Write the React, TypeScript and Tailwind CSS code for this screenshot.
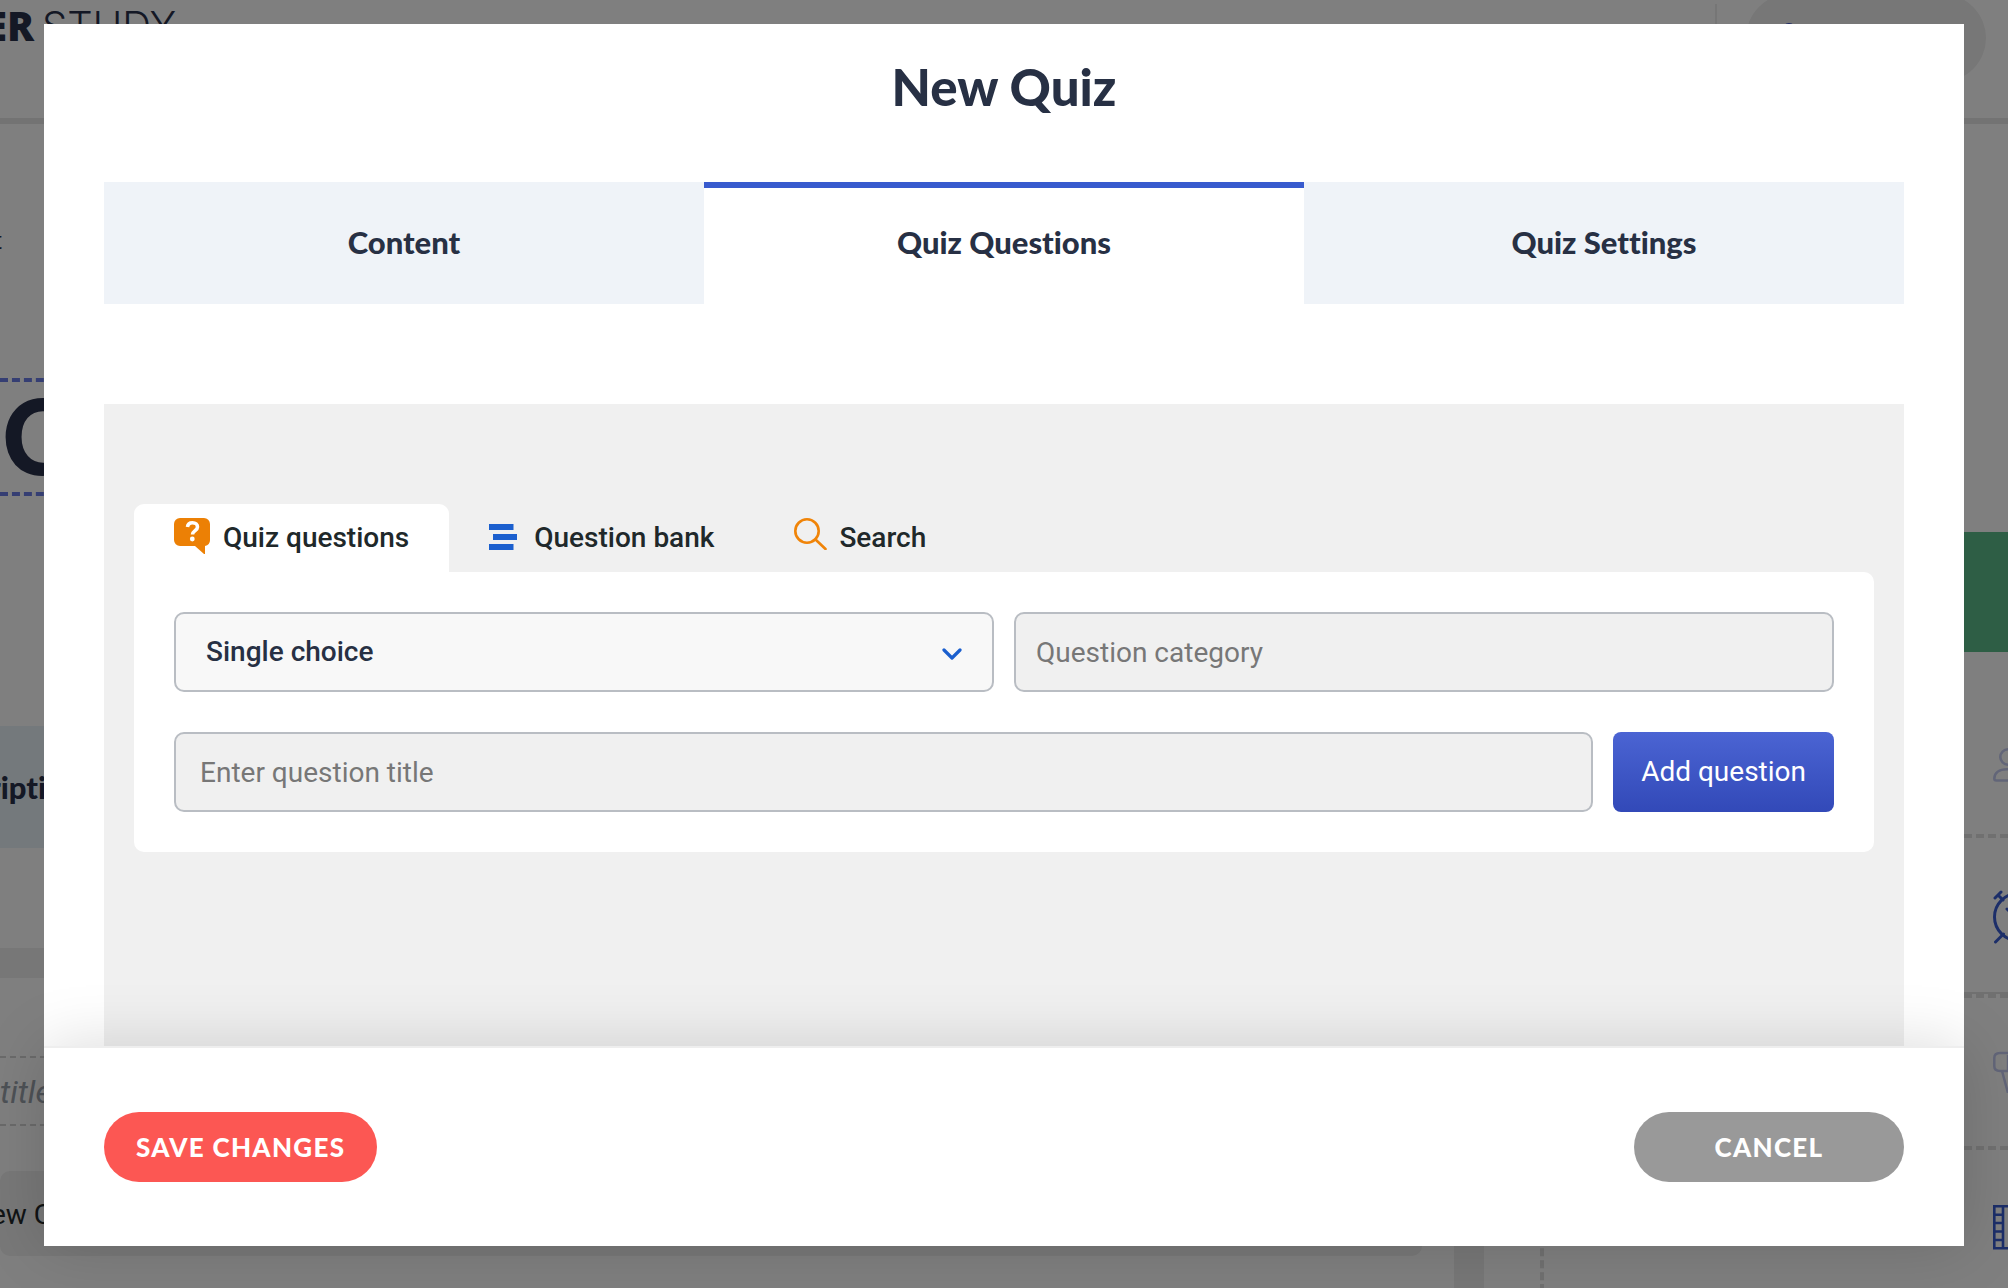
import React, { useState } from "react";

const mainTabs = ["Content", "Quiz Questions", "Quiz Settings"];

function BubbleIcon() {
  return (
    <svg width="36" height="36" viewBox="0 0 36 36" aria-hidden="true">
      <path d="M6 0h24a6 6 0 0 1 6 6v16a6 6 0 0 1-5 6V36h-1L21 28H6a6 6 0 0 1-6-6V6a6 6 0 0 1 6-6z" fill="#ec8005" />
      <path
        d="M13.500 9c.3-3 2.400-4.200 5-4.200 3 0 5 1.600 5 4.200 0 3.600-5 3.600-5 7.600"
        fill="none"
        stroke="#fff"
        strokeWidth="3.600"
      />
      <circle cx="18.300" cy="21" r="2.400" fill="#fff" />
    </svg>
  );
}

function BankIcon() {
  return (
    <svg width="28" height="26" viewBox="0 0 28 26" aria-hidden="true" fill="#1b5fce">
      <path d="M0 0h24.500v6H0zM4 10h24v6H4zM0 20h24.500v6H0z" />
    </svg>
  );
}

function SearchIcon() {
  return (
    <svg width="33" height="32" viewBox="0 0 33 32" aria-hidden="true" fill="none" stroke="#f08408" strokeWidth="2.600">
      <circle cx="13" cy="13" r="11.700" />
      <path d="M21.500 21.500 31.500 31" strokeLinecap="round" />
    </svg>
  );
}

function PageBehind() {
  return (
    <div aria-hidden="true" className="absolute inset-0 flex flex-col overflow-hidden bg-white">
      {/* site header */}
      <div className="-mt-[42px] flex h-[166px] shrink-0 items-center border-b-[6px] border-[#e6e6e6] pr-[22px]">
        <div className="mb-6 flex items-center gap-2 font-['Open_Sans',sans-serif] text-[40px] leading-[48px] text-[#29304a]">
          <span className="flex w-[34px] justify-end font-extrabold">ER</span>
          <span className="font-['Inter',sans-serif] font-light">STUDY</span>
        </div>
        <div className="ml-auto h-[68px] w-[2px] bg-[#ececec]" />
        <div className="ml-[29px] flex h-[88px] w-[240px] items-center rounded-full bg-[#eee] pl-9">
          <svg width="14" height="34" viewBox="0 0 14 34" fill="none" stroke="#3a50c8" strokeWidth="2">
            <circle cx="7" cy="9" r="6" />
          </svg>
        </div>
      </div>

      <div className="flex min-h-0 flex-1">
        {/* lesson editor */}
        <div className="flex min-w-0 flex-1 flex-col border-r-[30px] border-[#eee] text-[#29304a]">
          <div className="flex h-[254px] w-[2px] shrink-0 justify-end pt-[100px] text-2xl">t</div>
          <div className="h-[118px] shrink-0 border-y-4 border-dashed border-[#6a7de6] pl-[2px] font-['Lato',sans-serif] text-[104px] font-black leading-[106px]">
            C
          </div>
          <div className="mt-[230px] flex h-[122px] shrink-0 items-center bg-[#e9f2f9] font-['Lato',sans-serif] text-[31px] font-black [font-variant-ligatures:none]">
            <span className="-ml-[11px]">ription</span>
          </div>
          <div className="mt-[100px] h-[30px] shrink-0 bg-[#eee]" />
          <div className="mt-[78px] h-[70px] shrink-0 border-y-2 border-dashed border-[#d4d4d4] font-['Roboto',sans-serif] text-[32px] italic leading-[68px] text-[#9aa2ac]">
            title
          </div>
          <div className="mr-8 mt-[45px] flex h-[85px] shrink-0 items-center rounded-[10px] bg-[#f0f0f0] font-['Roboto',sans-serif] text-[28px] text-[#22282a]">
            <span className="-ml-[9px] pt-[2px]">ew Course</span>
          </div>
        </div>

        {/* lesson types */}
        <div className="flex w-[524px] shrink-0 flex-col pl-14">
          <div className="mt-[408px] h-[120px] shrink-0 bg-[#5cbc8a]" />
          <div className="flex flex-1 flex-col border-l-4 border-dashed border-[#e0e0e0]">
            <div className="flex h-[186px] shrink-0 items-center justify-end overflow-hidden border-b-4 border-dashed border-[#e0e0e0] pt-11">
              <svg width="15" height="34" viewBox="0 0 15 34" fill="none" stroke="#c4cbf0" strokeWidth="2.600">
                <circle cx="15" cy="9" r="7.700" />
                <path d="M15 21.300h-1C6 21.300 1.500 25 1.300 30.500c0 1.300.7 2 2 2H15" />
              </svg>
            </div>
            <div className="flex h-[160px] shrink-0 flex-col border-b-4 border-dashed border-[#e0e0e0]">
              <div className="flex flex-1 items-center justify-end overflow-hidden border-b-2 border-[#e0e0e0] pt-1">
                <svg width="15" height="54" viewBox="0 0 15 54" fill="none" stroke="#385dd2" strokeWidth="3" strokeLinecap="round">
                  <circle cx="25" cy="27" r="23.500" />
                  <path d="M2 8 8 2M5 5l5 5M2.500 52l8-8M14 19l4 4" />
                </svg>
              </div>
            </div>
            <div className="flex h-[152px] shrink-0 items-center justify-end overflow-hidden border-b-4 border-dashed border-[#e0e0e0]">
              <svg width="15" height="42" viewBox="0 0 15 42" fill="none" stroke="#c4cbf0" strokeWidth="2.500">
                <path d="M15 2H7Q1.300 2 1.300 7v8q0 5 5.700 5h8M15 4v16M9 20l6 22" />
              </svg>
            </div>
            <div className="flex h-[154px] shrink-0 items-center justify-end overflow-hidden">
              <svg width="15" height="45" viewBox="0 0 15 45" fill="none" stroke="#385dd2" strokeWidth="2.600">
                <path d="M16 1.300H1.300v42H16M10 1v42M1 9.700h9M1 18h9M1 26.500h9M1 35h9" />
              </svg>
            </div>
          </div>
        </div>
      </div>
      <div className="absolute inset-0 bg-black/50" />
    </div>
  );
}

export default function App() {
  const [active, setActive] = useState("Quiz Questions");

  return (
    <div className="relative min-h-screen overflow-hidden">
      <PageBehind />

      <div className="relative flex h-screen px-11 pb-[42px] pt-6 font-['Roboto',sans-serif]">
        <div role="dialog" aria-labelledby="quiz-title" className="flex flex-1 flex-col bg-white text-[#273044]">
          {/* title and main tabs */}
          <div className="px-[60px]">
            <h1
              id="quiz-title"
              className="flex h-[158px] items-center justify-center pb-8 font-['Lato',sans-serif] text-[51px] font-black"
            >
              New Quiz
            </h1>
            <div className="grid grid-cols-3 font-['Lato',sans-serif] text-[31px] font-black [font-variant-ligatures:none]">
              {mainTabs.map((tab) => (
                <button
                  key={tab}
                  type="button"
                  onClick={() => setActive(tab)}
                  className={
                    tab === active
                      ? "h-[122px] border-t-[6px] border-[#385bce] bg-white pb-2"
                      : "h-[122px] bg-[#eff3f8] pb-[2px]"
                  }
                >
                  {tab}
                </button>
              ))}
            </div>
          </div>

          {/* questions editor */}
          <div className="mx-[60px] mt-[100px] flex-1 bg-[#f0f0f0] px-[30px] pt-[100px]">
            <div className="flex text-[28px] font-medium text-[#20282a]">
              <button type="button" className="flex h-[68px] gap-[13px] rounded-t-[10px] bg-white px-10 pt-[14px] leading-[40px]">
                <BubbleIcon />
                Quiz questions
              </button>
              <button type="button" className="flex h-[68px] gap-[17px] px-10 pt-[14px] leading-[40px]">
                <span className="pt-[6px]">
                  <BankIcon />
                </span>
                Question bank
              </button>
              <button type="button" className="flex h-[68px] gap-3 px-10 pt-[14px] leading-[40px]">
                <SearchIcon />
                Search
              </button>
            </div>

            <form
              onSubmit={(e) => e.preventDefault()}
              className="flex flex-col gap-10 rounded-[10px] rounded-tl-none bg-white p-10 text-[28px]"
            >
              <div className="grid grid-cols-2 gap-5">
                <div className="relative">
                  <select
                    aria-label="Question type"
                    className="h-20 w-full appearance-none rounded-[10px] border-2 border-[#b9bdc3] bg-[#f8f8f8] px-[30px] font-medium"
                  >
                    <option>Single choice</option>
                  </select>
                  <svg
                    className="pointer-events-none absolute right-8 top-9"
                    width="20"
                    height="12"
                    viewBox="0 0 20 12"
                    fill="none"
                    stroke="#1b5fce"
                    strokeWidth="3.200"
                    strokeLinecap="round"
                    strokeLinejoin="round"
                  >
                    <path d="m2 2 8 8 8-8" />
                  </svg>
                </div>
                <input
                  aria-label="Question category"
                  placeholder="Question category"
                  className="h-20 min-w-0 rounded-[10px] border-2 border-[#b9bdc3] bg-[#f0f0f0] px-5 placeholder:text-[#777]"
                />
              </div>
              <div className="flex gap-5">
                <input
                  aria-label="Question title"
                  placeholder="Enter question title"
                  className="h-20 min-w-0 flex-1 rounded-[10px] border-2 border-[#b9bdc3] bg-[#f0f0f0] px-6 placeholder:text-[#777]"
                />
                <button
                  type="submit"
                  className="h-20 rounded-lg bg-linear-to-b from-[#4b64d3] to-[#3249b8] px-7 text-white"
                >
                  Add question
                </button>
              </div>
            </form>
          </div>

          {/* footer actions */}
          <div className="flex h-[200px] items-center justify-between border-t-2 border-[#eee] bg-white px-[60px] font-['Lato',sans-serif] text-[26px] font-black tracking-wider text-white shadow-[0_0_60px_rgba(0,0,0,0.15)]">
            <button type="button" className="h-[70px] rounded-full bg-[#fc5753] px-8">
              SAVE CHANGES
            </button>
            <button type="button" className="h-[70px] w-[270px] rounded-full bg-[#999]">
              CANCEL
            </button>
          </div>
        </div>
      </div>
    </div>
  );
}
